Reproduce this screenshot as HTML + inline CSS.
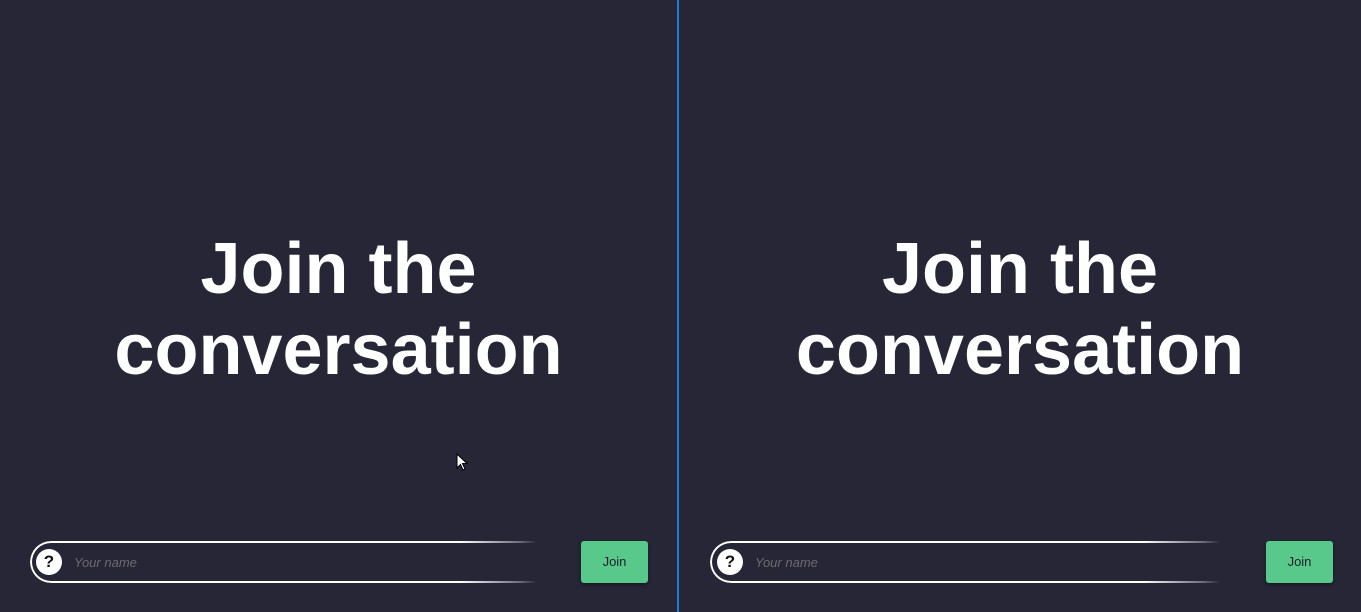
<!DOCTYPE html>
<html><head><style>
html,body{margin:0;padding:0;width:1361px;height:612px;overflow:hidden;background:#262637;font-family:"Liberation Sans",Arial,sans-serif}
.panel{position:absolute;top:0;height:612px;background:#262637}
.div{position:absolute;left:677px;top:0;width:2px;height:612px;background:#1a7fd6}
h1{position:absolute;left:0;right:0;top:229px;margin:0;text-align:center;color:#fff;font-size:72px;font-weight:bold;line-height:81px}
.inp{position:absolute;top:541px;height:38px;border:2px solid #fff;border-right:none;border-radius:21px 0 0 21px;
 -webkit-mask-image:linear-gradient(to right,#000 85%,rgba(0,0,0,0.3) 97%,transparent 100%)}
.q{position:absolute;top:549px;width:26px;height:26px;border-radius:50%;background:#fff;color:#111;font-weight:bold;font-size:17px;text-align:center;line-height:26px}
.ph{position:absolute;top:555px;font-style:italic;color:#6d6a70;font-size:13px}
.btn{position:absolute;top:541px;width:67px;height:42px;background:#58c98a;border-radius:3px;color:#1e1e2a;font-size:13px;text-align:center;line-height:42px;box-shadow:0 2px 4px rgba(0,0,0,0.4)}
</style></head><body>
<div class="panel" style="left:0;width:677px"><h1>Join the<br>conversation</h1></div>
<div class="panel" style="left:679px;width:682px"><h1>Join the<br>conversation</h1></div>
<div class="div"></div>
<div class="inp" style="left:30px;width:505px"></div>
<div class="q" style="left:36px">?</div>
<div class="ph" style="left:74px">Your name</div>
<div class="btn" style="left:581px">Join</div>
<div class="inp" style="left:710px;width:508px"></div>
<div class="q" style="left:717px">?</div>
<div class="ph" style="left:755px">Your name</div>
<div class="btn" style="left:1266px">Join</div>
<svg style="position:absolute;left:456px;top:453px" width="12" height="18" viewBox="0 0 12 18"><path d="M1 1 L1 15 L4.5 11.5 L7 17 L9 16 L6.5 10.5 L11 10.5 Z" fill="#fff" stroke="#000" stroke-width="1"/></svg>
</body></html>
